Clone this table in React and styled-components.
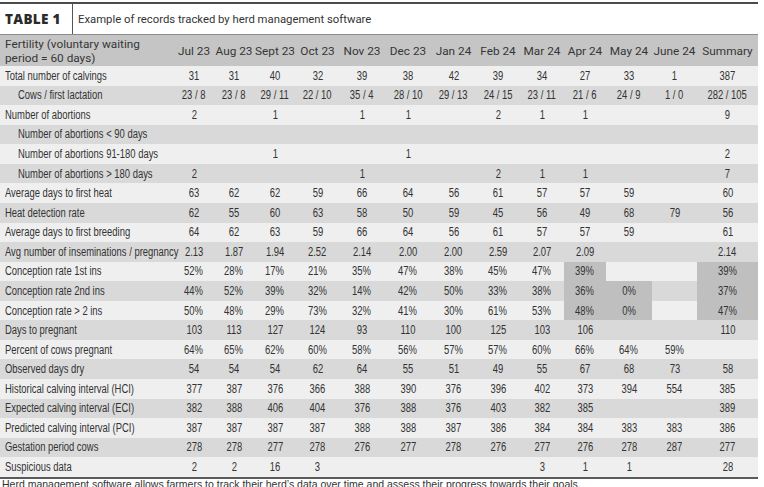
import React from "react";
import styled, { createGlobalStyle } from "styled-components";

const Global = createGlobalStyle`
  html, body { margin: 0; padding: 0; background: #ffffff; }
  body { font-family: "Liberation Sans", Arial, sans-serif; color: #333; }
`;

const Page = styled.div`
  width: 764px;
  display: flex;
  flex-direction: column;
  padding-top: 2px;
`;

const Frame = styled.div`
  width: 758px;
  display: flex;
  flex-direction: column;
  border-top: 2px solid #4b4b4b;
  border-bottom: 2px solid #5a5a5a;
`;

const TitleBar = styled.div`
  display: flex;
  align-items: stretch;
  height: 30px;
  border-bottom: 1px solid #8c8c8c;
`;

const TitleLabel = styled.div`
  width: 73px;
  display: flex;
  align-items: center;
  padding-left: 5px;
  box-sizing: border-box;
  border-right: 1px solid #555;
  font-family: "Open Sans", "Noto Sans", sans-serif;
  font-weight: 800;
  font-size: 13.5px;
  letter-spacing: 0.3px;
  color: #2b2b2b;
`;

const Subtitle = styled.div`
  display: flex;
  align-items: center;
  padding-left: 5px;
  font-family: Roboto, "Noto Sans", sans-serif;
  font-size: 11.3px;
  color: #333;
`;

const Table = styled.table`
  width: 758px;
  table-layout: fixed;
  border-collapse: collapse;
  border-spacing: 0;
`;

const HeadRow = styled.tr`
  background: #c5c5c5;
  height: 31px;
`;

const HeadCell = styled.th`
  padding: 0;
  font-family: Roboto, "Noto Sans", sans-serif;
  font-weight: 400;
  font-size: 11.8px;
  color: #363636;
  text-align: ${(p) => (p.$left ? "left" : "center")};
  padding-left: ${(p) => (p.$left ? "5px" : "0")};
  line-height: 14px;
  white-space: nowrap;
  vertical-align: middle;
`;

const Row = styled.tr`
  background: ${(p) => (p.$dark ? "#d9d9d9" : "#efefef")};
  height: 19.57px;
`;

const Label = styled.td`
  padding: 0 0 0 ${(p) => (p.$indent ? "18px" : "5px")};
  font-family: "Liberation Sans", Arial, sans-serif;
  font-size: 12.5px;
  line-height: 14px;
  color: #333;
  white-space: nowrap;
  text-align: left;
  overflow: visible;
`;

const Cell = styled.td`
  padding: 0;
  font-family: "Liberation Sans", Arial, sans-serif;
  font-size: 12.5px;
  line-height: 14px;
  color: #333;
  text-align: center;
  white-space: nowrap;
  background: ${(p) => (p.$hl ? "#bfbfbf" : "transparent")};
`;

const Narrow = styled.span`
  display: inline-block;
  transform: scaleX(0.755);
  transform-origin: ${(p) => (p.$left ? "left center" : "center center")};
`;

const Caption = styled.div`
  padding: 0 0 0 2px;
  font-family: "Liberation Sans", Arial, sans-serif;
  font-size: 10.5px;
  line-height: 10px;
  color: #333;
  white-space: nowrap;
`;

const widths = [174, 40, 40, 42, 43, 46, 46, 45, 44, 44, 42, 46, 45, 61];

const months = [
  "Jul 23", "Aug 23", "Sept 23", "Oct 23", "Nov 23", "Dec 23", "Jan 24",
  "Feb 24", "Mar 24", "Apr 24", "May 24", "June 24", "Summary",
];

const rows = [
  { label: "Total number of calvings", v: [31, 31, 40, 32, 39, 38, 42, 39, 34, 27, 33, 1, 387] },
  { label: "Cows / first lactation", indent: true, v: ["23 / 8", "23 / 8", "29 / 11", "22 / 10", "35 / 4", "28 / 10", "29 / 13", "24 / 15", "23 / 11", "21 / 6", "24 / 9", "1 / 0", "282 / 105"] },
  { label: "Number of abortions", v: [2, "", 1, "", 1, 1, "", 2, 1, 1, "", "", 9] },
  { label: "Number of abortions < 90 days", indent: true, v: ["", "", "", "", "", "", "", "", "", "", "", "", ""] },
  { label: "Number of abortions 91-180 days", indent: true, v: ["", "", 1, "", "", 1, "", "", "", "", "", "", 2] },
  { label: "Number of abortions > 180 days", indent: true, v: [2, "", "", "", 1, "", "", 2, 1, 1, "", "", 7] },
  { label: "Average days to first heat", v: [63, 62, 62, 59, 66, 64, 56, 61, 57, 57, 59, "", 60] },
  { label: "Heat detection rate", v: [62, 55, 60, 63, 58, 50, 59, 45, 56, 49, 68, 79, 56] },
  { label: "Average days to first breeding", v: [64, 62, 63, 59, 66, 64, 56, 61, 57, 57, 59, "", 61] },
  { label: "Avg number of inseminations / pregnancy", v: ["2.13", "1.87", "1.94", "2.52", "2.14", "2.00", "2.00", "2.59", "2.07", "2.09", "", "", "2.14"] },
  { label: "Conception rate 1st ins", hl: [9, 12], v: ["52%", "28%", "17%", "21%", "35%", "47%", "38%", "45%", "47%", "39%", "", "", "39%"] },
  { label: "Conception rate 2nd ins", hl: [9, 10, 12], v: ["44%", "52%", "39%", "32%", "14%", "42%", "50%", "33%", "38%", "36%", "0%", "", "37%"] },
  { label: "Conception rate > 2 ins", hl: [9, 10, 12], v: ["50%", "48%", "29%", "73%", "32%", "41%", "30%", "61%", "53%", "48%", "0%", "", "47%"] },
  { label: "Days to pregnant", v: [103, 113, 127, 124, 93, 110, 100, 125, 103, 106, "", "", 110] },
  { label: "Percent of cows pregnant", v: ["64%", "65%", "62%", "60%", "58%", "56%", "57%", "57%", "60%", "66%", "64%", "59%", ""] },
  { label: "Observed days dry", v: [54, 54, 54, 62, 64, 55, 51, 49, 55, 67, 68, 73, 58] },
  { label: "Historical calving interval (HCI)", v: [377, 387, 376, 366, 388, 390, 376, 396, 402, 373, 394, 554, 385] },
  { label: "Expected calving interval (ECI)", v: [382, 388, 406, 404, 376, 388, 376, 403, 382, 385, "", "", 389] },
  { label: "Predicted calving interval (PCI)", v: [387, 387, 387, 387, 388, 388, 387, 386, 384, 384, 383, 383, 386] },
  { label: "Gestation period cows", v: [278, 278, 277, 278, 276, 277, 278, 276, 277, 276, 278, 287, 277] },
  { label: "Suspicious data", v: [2, 2, 16, 3, "", "", "", "", 3, 1, 1, "", 28] },
];

export default function App() {
  return (
    <Page>
      <Global />
      <Frame>
        <TitleBar>
          <TitleLabel>TABLE 1</TitleLabel>
          <Subtitle>Example of records tracked by herd management software</Subtitle>
        </TitleBar>
        <Table>
          <colgroup>
            {widths.map((w, i) => (
              <col key={i} style={{ width: w }} />
            ))}
          </colgroup>
          <thead>
            <HeadRow>
              <HeadCell $left>
                Fertility (voluntary waiting
                <br />
                period = 60 days)
              </HeadCell>
              {months.map((m) => (
                <HeadCell key={m}>{m}</HeadCell>
              ))}
            </HeadRow>
          </thead>
          <tbody>
            {rows.map((r, i) => (
              <Row key={r.label} $dark={i % 2 === 1}>
                <Label $indent={r.indent}>
                  <Narrow $left>{r.label}</Narrow>
                </Label>
                {r.v.map((v, j) => (
                  <Cell key={j} $hl={r.hl && r.hl.includes(j)}>
                    {v !== "" && <Narrow>{v}</Narrow>}
                  </Cell>
                ))}
              </Row>
            ))}
          </tbody>
        </Table>
      </Frame>
      <Caption>
        Herd management software allows farmers to track their herd’s data over time and assess their progress towards their goals.
      </Caption>
    </Page>
  );
}
